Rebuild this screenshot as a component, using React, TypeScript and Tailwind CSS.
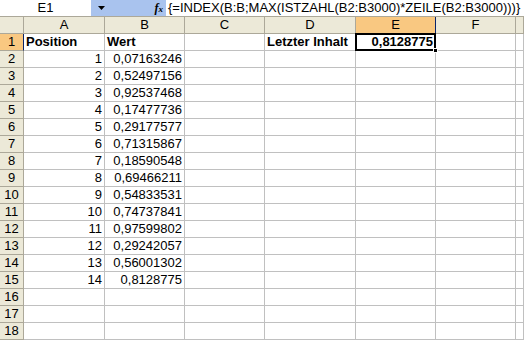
import React from 'react';

const cols = ['A', 'B', 'C', 'D', 'E', 'F', ''];

const values = [
  '0,07163246',
  '0,52497156',
  '0,92537468',
  '0,17477736',
  '0,29177577',
  '0,71315867',
  '0,18590548',
  '0,69466211',
  '0,54833531',
  '0,74737841',
  '0,97599802',
  '0,29242057',
  '0,56001302',
  '0,8128775',
];

const cell = 'h-[17px] border-r border-b border-[#c0c0c0] px-[2px] leading-[16px] overflow-visible whitespace-nowrap';

const RowHeader = ({ n, active }: { n: number; active?: boolean }) => (
  <div
    className={
      active
        ? 'h-[17px] border-r border-r-[#0a246a] border-b border-b-[#aca899] bg-[#f9c881] text-center leading-[16px]'
        : 'h-[17px] border-r border-b border-[#aca899] bg-[#ece9d8] text-center leading-[16px]'
    }
  >
    {n}
  </div>
);

export default function App() {
  const rows = Array.from({ length: 18 }, (_, i) => i + 1);

  return (
    <div className="w-[524px] h-[342px] overflow-hidden bg-white text-[13px] text-black" style={{ fontFamily: '"Liberation Sans", Arial, sans-serif' }}>
      {/* formula bar */}
      <div className="flex h-[17px] border-b border-[#aca899] leading-[16px]">
        <div className="w-[91px] bg-white text-center">E1</div>
        <div className="w-[75px] bg-[#a9c3ee] flex items-center">
          <svg width="7" height="4" viewBox="0 0 7 4" className="ml-[7px]">
            <path d="M0 0H7L3.5 4Z" fill="#000" />
          </svg>
          <span className="ml-auto mr-[3px] italic font-bold text-[12px]" style={{ fontFamily: '"Liberation Serif", serif' }}>
            f<span className="text-[9px]">x</span>
          </span>
        </div>
        <div className="flex-1 pl-[2px] whitespace-nowrap">{'{=INDEX(B:B;MAX(ISTZAHL(B2:B3000)*ZEILE(B2:B3000)))}'}</div>
      </div>

      <div className="grid grid-cols-[24px_81px_80px_80px_91px_80px_80px_8px]">
        {/* column headers */}
        <div className="h-[17px] border-r border-b border-[#aca899] bg-[#ece9d8]" />
        {cols.map((c) =>
          c === 'E' ? (
            <div key={c} className="h-[17px] border-r border-r-[#0a246a] border-b border-b-[#0a246a] bg-[#f9c881] text-center leading-[16px]">
              {c}
            </div>
          ) : (
            <div key={c || 'x'} className="h-[17px] border-r border-b border-[#aca899] bg-[#ece9d8] text-center leading-[16px]">
              {c}
            </div>
          )
        )}

        {rows.map((r) => (
          <React.Fragment key={r}>
            <RowHeader n={r} active={r === 1} />
            {r === 1 ? (
              <>
                <div className={`${cell} font-bold`}>Position</div>
                <div className={`${cell} font-bold`}>Wert</div>
                <div className={cell} />
                <div className={`${cell} font-bold`}>Letzter Inhalt</div>
                <div className={`${cell} font-bold text-right relative`}>
                  0,8128775
                  <div className="absolute -left-[1px] -top-[1px] w-[81px] h-[18px] border-2 border-black pointer-events-none" />
                  <div className="absolute -right-[3px] -bottom-[3px] w-[5px] h-[5px] bg-black border border-white" />
                </div>
                <div className={cell} />
                <div className={cell} />
              </>
            ) : (
              <>
                <div className={`${cell} text-right`}>{r <= 15 ? r - 1 : ''}</div>
                <div className={`${cell} text-right`}>{r <= 15 ? values[r - 2] : ''}</div>
                <div className={cell} />
                <div className={cell} />
                <div className={cell} />
                <div className={cell} />
                <div className={cell} />
              </>
            )}
          </React.Fragment>
        ))}
      </div>
    </div>
  );
}
